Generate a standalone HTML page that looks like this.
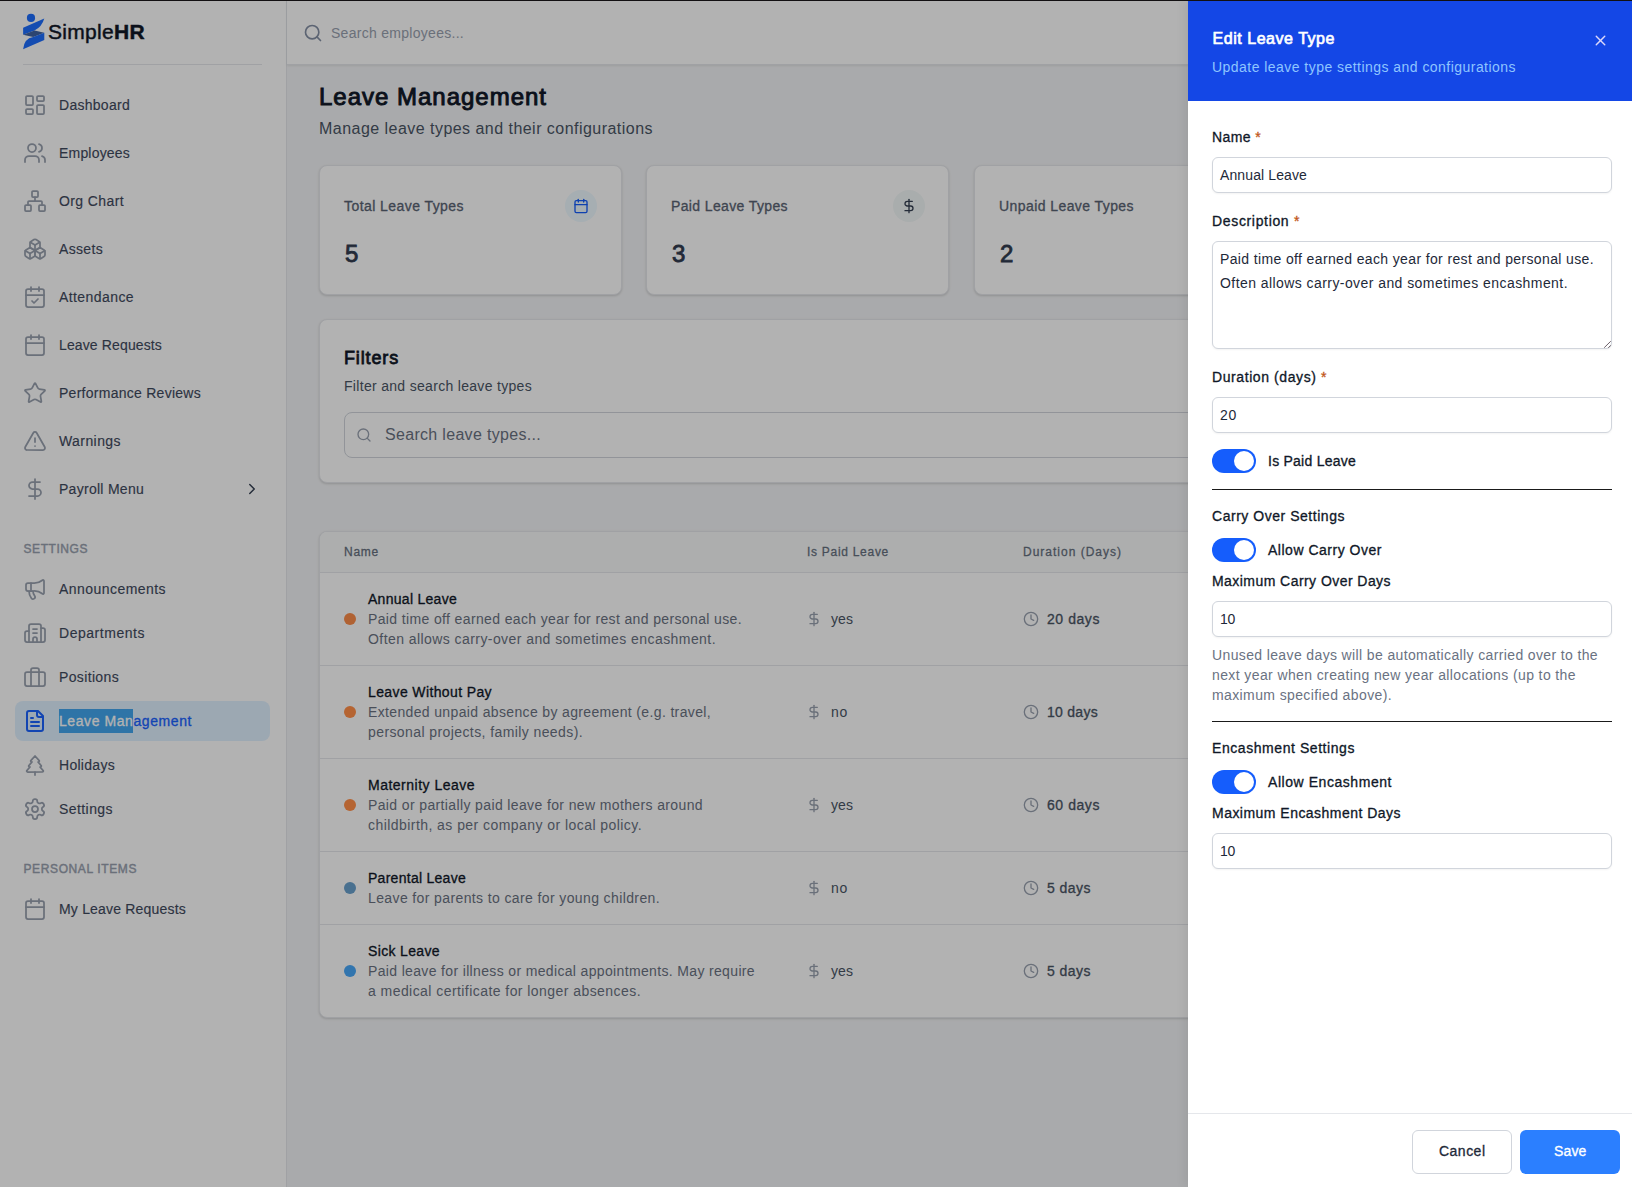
<!DOCTYPE html>
<html><head><meta charset="utf-8"><title>SimpleHR</title>
<style>
html,body{margin:0;padding:0;}
body{width:1632px;height:1187px;overflow:hidden;position:relative;background:#fff;font-family:"Liberation Sans", sans-serif;}
.a{position:absolute;}
.t{position:absolute;white-space:nowrap;font-family:"Liberation Sans", sans-serif;}
b{font-weight:700}
</style></head><body>
<div class="a" style="left:0;top:0;width:1632px;height:1187px;overflow:hidden">
<div class="a" style="left:0;top:0;width:286px;height:1187px;background:#fff;border-right:1px solid #e5e7eb"></div>
<svg class="a" style="left:18px;top:10px" width="40" height="45" viewBox="18 10 40 45">
<circle cx="31" cy="17.9" r="4.1" fill="#1e6efe"/>
<path d="M44.3 18.4 L23.1 27.8 L23.1 34.8 L34.5 30.5 Q42 26.5 44.3 18.4 Z" fill="#1e6efe"/>
<path d="M34.5 30.5 L44.3 32.8 L33.2 37 L23.1 34.8 Z" fill="#3f64a4"/>
<path d="M44.3 32.8 L44.3 40 L23.1 49.3 Q24 38.5 33.2 37 Z" fill="#1e6efe"/>
</svg>
<div class="t" style="left:48px;top:18.4px;font-size:21px;font-weight:400;color:#111827;line-height:28px;letter-spacing:0.307px;-webkit-text-stroke:0.45px currentColor;">Simple<b>HR</b></div>
<div class="a" style="left:23px;top:64px;width:239px;height:1px;background:#e5e7eb"></div>
<div class="a" style="left:23px;top:93px;width:24px;height:24px"><svg width="24" height="24" viewBox="0 0 24 24" fill="none" stroke="#99a1af" stroke-width="1.75" stroke-linecap="round" stroke-linejoin="round" style="display:block;"><rect width="7" height="9" x="3" y="3" rx="1"/><rect width="7" height="5" x="14" y="3" rx="1"/><rect width="7" height="9" x="14" y="12" rx="1"/><rect width="7" height="5" x="3" y="16" rx="1"/></svg></div>
<div class="t" style="left:59px;top:95.0px;font-size:14px;font-weight:400;color:#3f4a5e;line-height:20px;letter-spacing:0.278px;-webkit-text-stroke:0.14px currentColor;">Dashboard</div>
<div class="a" style="left:23px;top:141px;width:24px;height:24px"><svg width="24" height="24" viewBox="0 0 24 24" fill="none" stroke="#99a1af" stroke-width="1.75" stroke-linecap="round" stroke-linejoin="round" style="display:block;"><path d="M16 21v-2a4 4 0 0 0-4-4H6a4 4 0 0 0-4 4v2"/><circle cx="9" cy="7" r="4"/><path d="M22 21v-2a4 4 0 0 0-3-3.87"/><path d="M16 3.13a4 4 0 0 1 0 7.75"/></svg></div>
<div class="t" style="left:59px;top:143.0px;font-size:14px;font-weight:400;color:#3f4a5e;line-height:20px;letter-spacing:0.193px;-webkit-text-stroke:0.14px currentColor;">Employees</div>
<div class="a" style="left:23px;top:189px;width:24px;height:24px"><svg width="24" height="24" viewBox="0 0 24 24" fill="none" stroke="#99a1af" stroke-width="1.75" stroke-linecap="round" stroke-linejoin="round" style="display:block;"><rect x="16" y="16" width="6" height="6" rx="1"/><rect x="2" y="16" width="6" height="6" rx="1"/><rect x="9" y="2" width="6" height="6" rx="1"/><path d="M5 16v-3a1 1 0 0 1 1-1h12a1 1 0 0 1 1 1v3"/><path d="M12 12V8"/></svg></div>
<div class="t" style="left:59px;top:191.0px;font-size:14px;font-weight:400;color:#3f4a5e;line-height:20px;letter-spacing:0.392px;-webkit-text-stroke:0.14px currentColor;">Org Chart</div>
<div class="a" style="left:23px;top:237px;width:24px;height:24px"><svg width="24" height="24" viewBox="0 0 24 24" fill="none" stroke="#99a1af" stroke-width="1.75" stroke-linecap="round" stroke-linejoin="round" style="display:block;"><path d="M2.97 12.92A2 2 0 0 0 2 14.63v3.24a2 2 0 0 0 .97 1.71l3 1.8a2 2 0 0 0 2.06 0L12 19v-5.5l-5-3-4.03 2.42Z"/><path d="m7 16.5-4.74-2.85"/><path d="m7 16.5 5-3"/><path d="M7 16.5v5.17"/><path d="M12 13.5V19l3.97 2.38a2 2 0 0 0 2.06 0l3-1.8a2 2 0 0 0 .97-1.71v-3.24a2 2 0 0 0-.97-1.71L17 10.5l-5 3Z"/><path d="m17 16.5-5-3"/><path d="m17 16.5 4.74-2.85"/><path d="M17 16.5v5.17"/><path d="M7.97 4.42A2 2 0 0 0 7 6.13v4.37l5 3 5-3V6.13a2 2 0 0 0-.97-1.71l-3-1.8a2 2 0 0 0-2.06 0l-3 1.8Z"/><path d="M12 8 7.26 5.15"/><path d="m12 8 4.74-2.85"/><path d="M12 13.5V8"/></svg></div>
<div class="t" style="left:59px;top:239.0px;font-size:14px;font-weight:400;color:#3f4a5e;line-height:20px;letter-spacing:0.331px;-webkit-text-stroke:0.14px currentColor;">Assets</div>
<div class="a" style="left:23px;top:285px;width:24px;height:24px"><svg width="24" height="24" viewBox="0 0 24 24" fill="none" stroke="#99a1af" stroke-width="1.75" stroke-linecap="round" stroke-linejoin="round" style="display:block;"><path d="M8 2v4"/><path d="M16 2v4"/><rect width="18" height="18" x="3" y="4" rx="2"/><path d="M3 10h18"/><path d="m9 16 2 2 4-4"/></svg></div>
<div class="t" style="left:59px;top:287.0px;font-size:14px;font-weight:400;color:#3f4a5e;line-height:20px;letter-spacing:0.416px;-webkit-text-stroke:0.14px currentColor;">Attendance</div>
<div class="a" style="left:23px;top:333px;width:24px;height:24px"><svg width="24" height="24" viewBox="0 0 24 24" fill="none" stroke="#99a1af" stroke-width="1.75" stroke-linecap="round" stroke-linejoin="round" style="display:block;"><path d="M8 2v4"/><path d="M16 2v4"/><rect width="18" height="18" x="3" y="4" rx="2"/><path d="M3 10h18"/></svg></div>
<div class="t" style="left:59px;top:335.0px;font-size:14px;font-weight:400;color:#3f4a5e;line-height:20px;letter-spacing:0.129px;-webkit-text-stroke:0.14px currentColor;">Leave Requests</div>
<div class="a" style="left:23px;top:381px;width:24px;height:24px"><svg width="24" height="24" viewBox="0 0 24 24" fill="none" stroke="#99a1af" stroke-width="1.75" stroke-linecap="round" stroke-linejoin="round" style="display:block;"><path d="M11.525 2.295a.53.53 0 0 1 .95 0l2.31 4.679a2.123 2.123 0 0 0 1.595 1.16l5.166.756a.53.53 0 0 1 .294.904l-3.736 3.638a2.123 2.123 0 0 0-.611 1.878l.882 5.14a.53.53 0 0 1-.771.56l-4.618-2.428a2.122 2.122 0 0 0-1.973 0L6.396 21.01a.53.53 0 0 1-.77-.56l.881-5.139a2.122 2.122 0 0 0-.611-1.879L2.16 9.795a.53.53 0 0 1 .294-.906l5.165-.755a2.122 2.122 0 0 0 1.597-1.16z"/></svg></div>
<div class="t" style="left:59px;top:383.0px;font-size:14px;font-weight:400;color:#3f4a5e;line-height:20px;letter-spacing:0.266px;-webkit-text-stroke:0.14px currentColor;">Performance Reviews</div>
<div class="a" style="left:23px;top:429px;width:24px;height:24px"><svg width="24" height="24" viewBox="0 0 24 24" fill="none" stroke="#99a1af" stroke-width="1.75" stroke-linecap="round" stroke-linejoin="round" style="display:block;"><path d="m21.73 18-8-14a2 2 0 0 0-3.48 0l-8 14A2 2 0 0 0 4 21h16a2 2 0 0 0 1.73-3"/><path d="M12 9v4"/><path d="M12 17h.01"/></svg></div>
<div class="t" style="left:59px;top:431.0px;font-size:14px;font-weight:400;color:#3f4a5e;line-height:20px;letter-spacing:0.422px;-webkit-text-stroke:0.14px currentColor;">Warnings</div>
<div class="a" style="left:23px;top:477px;width:24px;height:24px"><svg width="24" height="24" viewBox="0 0 24 24" fill="none" stroke="#99a1af" stroke-width="1.75" stroke-linecap="round" stroke-linejoin="round" style="display:block;"><line x1="12" x2="12" y1="2" y2="22"/><path d="M17 5H9.5a3.5 3.5 0 0 0 0 7h5a3.5 3.5 0 0 1 0 7H6"/></svg></div>
<div class="t" style="left:59px;top:479.0px;font-size:14px;font-weight:400;color:#3f4a5e;line-height:20px;letter-spacing:0.275px;-webkit-text-stroke:0.14px currentColor;">Payroll Menu</div>
<div class="a" style="left:243px;top:480px;width:18px;height:18px"><svg width="18" height="18" viewBox="0 0 24 24" fill="none" stroke="#364153" stroke-width="2" stroke-linecap="round" stroke-linejoin="round" style="display:block;"><path d="m9 18 6-6-6-6"/></svg></div>
<div class="t" style="left:23.5px;top:540.5px;font-size:12px;font-weight:400;color:#99a1af;line-height:16px;letter-spacing:0.561px;-webkit-text-stroke:0.42px currentColor;">SETTINGS</div>
<div class="a" style="left:23px;top:577px;width:24px;height:24px"><svg width="24" height="24" viewBox="0 0 24 24" fill="none" stroke="#99a1af" stroke-width="1.75" stroke-linecap="round" stroke-linejoin="round" style="display:block;"><path d="M11 6a13 13 0 0 0 8.4-2.8A1 1 0 0 1 21 4v12a1 1 0 0 1-1.6.8A13 13 0 0 0 11 14H5a2 2 0 0 1-2-2V8a2 2 0 0 1 2-2z"/><path d="M6 14a12 12 0 0 0 2.4 7.2 2 2 0 0 0 3.2-2.4A8 8 0 0 1 10 14"/><path d="M8 6v8"/></svg></div>
<div class="t" style="left:59px;top:579.0px;font-size:14px;font-weight:400;color:#3f4a5e;line-height:20px;letter-spacing:0.447px;-webkit-text-stroke:0.14px currentColor;">Announcements</div>
<div class="a" style="left:23px;top:621px;width:24px;height:24px"><svg width="24" height="24" viewBox="0 0 24 24" fill="none" stroke="#99a1af" stroke-width="1.75" stroke-linecap="round" stroke-linejoin="round" style="display:block;"><path d="M10 12h4"/><path d="M10 8h4"/><path d="M14 21v-3a2 2 0 0 0-4 0v3"/><path d="M6 10H4a2 2 0 0 0-2 2v7a2 2 0 0 0 2 2h16a2 2 0 0 0 2-2V9a2 2 0 0 0-2-2h-2"/><path d="M6 21V5a2 2 0 0 1 2-2h8a2 2 0 0 1 2 2v16"/></svg></div>
<div class="t" style="left:59px;top:623.0px;font-size:14px;font-weight:400;color:#3f4a5e;line-height:20px;letter-spacing:0.531px;-webkit-text-stroke:0.14px currentColor;">Departments</div>
<div class="a" style="left:23px;top:665px;width:24px;height:24px"><svg width="24" height="24" viewBox="0 0 24 24" fill="none" stroke="#99a1af" stroke-width="1.75" stroke-linecap="round" stroke-linejoin="round" style="display:block;"><rect width="20" height="14" x="2" y="7" rx="2" ry="2"/><path d="M16 21V5a2 2 0 0 0-2-2h-4a2 2 0 0 0-2 2v16"/></svg></div>
<div class="t" style="left:59px;top:667.0px;font-size:14px;font-weight:400;color:#3f4a5e;line-height:20px;letter-spacing:0.354px;-webkit-text-stroke:0.14px currentColor;">Positions</div>
<div class="a" style="left:15px;top:701px;width:255px;height:40px;border-radius:8px;background:#e0f1ff"></div>
<div class="a" style="left:23px;top:709px;width:24px;height:24px"><svg width="24" height="24" viewBox="0 0 24 24" fill="none" stroke="#1a63ff" stroke-width="2" stroke-linecap="round" stroke-linejoin="round" style="display:block;"><path d="M15 2H6a2 2 0 0 0-2 2v16a2 2 0 0 0 2 2h12a2 2 0 0 0 2-2V7Z"/><path d="M14 2v4a2 2 0 0 0 2 2h4"/><path d="M10 9H8"/><path d="M16 13H8"/><path d="M16 17H8"/></svg></div>
<div class="t" style="left:59px;top:711.0px;font-size:14px;font-weight:400;color:#1a63ff;line-height:20px;letter-spacing:0.577px;-webkit-text-stroke:0.31px currentColor;"><span style="display:inline-block;height:24px;line-height:24px;margin:-2px 0;background:#43a7ef;color:#fff;vertical-align:top">Leave Man</span>agement</div>
<div class="a" style="left:23px;top:753px;width:24px;height:24px"><svg width="24" height="24" viewBox="0 0 24 24" fill="none" stroke="#99a1af" stroke-width="1.75" stroke-linecap="round" stroke-linejoin="round" style="display:block;"><path d="m17 14 3 3.3a1 1 0 0 1-.7 1.7H4.7a1 1 0 0 1-.7-1.7L7 14h-.3a1 1 0 0 1-.7-1.7L9 9h-.2A1 1 0 0 1 8 7.3L12 3l4 4.3a1 1 0 0 1-.8 1.7H15l3 3.3a1 1 0 0 1-.7 1.7H17Z"/><path d="M12 22v-3"/></svg></div>
<div class="t" style="left:59px;top:755.0px;font-size:14px;font-weight:400;color:#3f4a5e;line-height:20px;letter-spacing:0.287px;-webkit-text-stroke:0.14px currentColor;">Holidays</div>
<div class="a" style="left:23px;top:797px;width:24px;height:24px"><svg width="24" height="24" viewBox="0 0 24 24" fill="none" stroke="#99a1af" stroke-width="1.75" stroke-linecap="round" stroke-linejoin="round" style="display:block;"><path d="M12.22 2h-.44a2 2 0 0 0-2 2v.18a2 2 0 0 1-1 1.73l-.43.25a2 2 0 0 1-2 0l-.15-.08a2 2 0 0 0-2.73.73l-.22.38a2 2 0 0 0 .73 2.73l.15.1a2 2 0 0 1 1 1.72v.51a2 2 0 0 1-1 1.74l-.15.09a2 2 0 0 0-.73 2.73l.22.38a2 2 0 0 0 2.73.73l.15-.08a2 2 0 0 1 2 0l.43.25a2 2 0 0 1 1 1.73V20a2 2 0 0 0 2 2h.44a2 2 0 0 0 2-2v-.18a2 2 0 0 1 1-1.73l.43-.25a2 2 0 0 1 2 0l.15.08a2 2 0 0 0 2.73-.73l.22-.39a2 2 0 0 0-.73-2.73l-.15-.08a2 2 0 0 1-1-1.74v-.5a2 2 0 0 1 1-1.74l.15-.09a2 2 0 0 0 .73-2.73l-.22-.38a2 2 0 0 0-2.73-.73l-.15.08a2 2 0 0 1-2 0l-.43-.25a2 2 0 0 1-1-1.73V4a2 2 0 0 0-2-2z"/><circle cx="12" cy="12" r="3"/></svg></div>
<div class="t" style="left:59px;top:799.0px;font-size:14px;font-weight:400;color:#3f4a5e;line-height:20px;letter-spacing:0.426px;-webkit-text-stroke:0.14px currentColor;">Settings</div>
<div class="t" style="left:23.5px;top:860.5px;font-size:12px;font-weight:400;color:#99a1af;line-height:16px;letter-spacing:0.613px;-webkit-text-stroke:0.42px currentColor;">PERSONAL ITEMS</div>
<div class="a" style="left:23px;top:897px;width:24px;height:24px"><svg width="24" height="24" viewBox="0 0 24 24" fill="none" stroke="#99a1af" stroke-width="1.75" stroke-linecap="round" stroke-linejoin="round" style="display:block;"><path d="M8 2v4"/><path d="M16 2v4"/><rect width="18" height="18" x="3" y="4" rx="2"/><path d="M3 10h18"/></svg></div>
<div class="t" style="left:59px;top:899.0px;font-size:14px;font-weight:400;color:#3f4a5e;line-height:20px;letter-spacing:0.192px;-webkit-text-stroke:0.14px currentColor;">My Leave Requests</div>
<div class="a" style="left:287px;top:0;width:1345px;height:1187px;background:#f3f4f6"></div>
<div class="a" style="left:287px;top:0;width:1345px;height:64px;background:#fff;border-bottom:1px solid #e5e7eb;box-shadow:0 1px 2px rgba(0,0,0,.08)"></div>
<div class="a" style="left:303px;top:23px;width:20px;height:20px"><svg width="20" height="20" viewBox="0 0 24 24" fill="none" stroke="#8590a5" stroke-width="2" stroke-linecap="round" stroke-linejoin="round" style="display:block;"><circle cx="11" cy="11" r="8"/><path d="m21 21-4.3-4.3"/></svg></div>
<div class="t" style="left:331px;top:23.0px;font-size:14px;font-weight:400;color:#99a1af;line-height:20px;letter-spacing:0.283px;">Search employees...</div>
<div class="t" style="left:319px;top:81.0px;font-size:24px;font-weight:400;color:#101828;line-height:32px;letter-spacing:0.990px;-webkit-text-stroke:0.96px currentColor;">Leave Management</div>
<div class="t" style="left:319px;top:117.0px;font-size:16px;font-weight:400;color:#4a5565;line-height:24px;letter-spacing:0.465px;">Manage leave types and their configurations</div>
<div class="a" style="left:319px;top:165px;width:303px;height:130px;background:#fff;border:1px solid #e5e7eb;border-radius:8px;box-sizing:border-box;box-shadow:0 1px 3px rgba(0,0,0,.1),0 1px 2px rgba(0,0,0,.06)"></div>
<div class="t" style="left:344px;top:196.0px;font-size:14px;font-weight:400;color:#5a6474;line-height:20px;letter-spacing:0.435px;-webkit-text-stroke:0.31px currentColor;">Total Leave Types</div>
<div class="t" style="left:345px;top:238.0px;font-size:24px;font-weight:400;color:#323c50;line-height:32px;letter-spacing:0.000px;letter-spacing:0.5px;-webkit-text-stroke:0.84px currentColor;">5</div>
<div class="a" style="left:646px;top:165px;width:303px;height:130px;background:#fff;border:1px solid #e5e7eb;border-radius:8px;box-sizing:border-box;box-shadow:0 1px 3px rgba(0,0,0,.1),0 1px 2px rgba(0,0,0,.06)"></div>
<div class="t" style="left:671px;top:196.0px;font-size:14px;font-weight:400;color:#5a6474;line-height:20px;letter-spacing:0.372px;-webkit-text-stroke:0.31px currentColor;">Paid Leave Types</div>
<div class="t" style="left:672px;top:238.0px;font-size:24px;font-weight:400;color:#323c50;line-height:32px;letter-spacing:0.000px;letter-spacing:0.5px;-webkit-text-stroke:0.84px currentColor;">3</div>
<div class="a" style="left:974px;top:165px;width:303px;height:130px;background:#fff;border:1px solid #e5e7eb;border-radius:8px;box-sizing:border-box;box-shadow:0 1px 3px rgba(0,0,0,.1),0 1px 2px rgba(0,0,0,.06)"></div>
<div class="t" style="left:999px;top:196.0px;font-size:14px;font-weight:400;color:#5a6474;line-height:20px;letter-spacing:0.423px;-webkit-text-stroke:0.31px currentColor;">Unpaid Leave Types</div>
<div class="t" style="left:1000px;top:238.0px;font-size:24px;font-weight:400;color:#323c50;line-height:32px;letter-spacing:0.000px;letter-spacing:0.5px;-webkit-text-stroke:0.84px currentColor;">2</div>
<div class="a" style="left:565px;top:190px;width:32px;height:32px;border-radius:16px;background:#eef9ff"></div>
<div class="a" style="left:573px;top:198px;width:16px;height:16px"><svg width="16" height="16" viewBox="0 0 24 24" fill="none" stroke="#155dfc" stroke-width="2" stroke-linecap="round" stroke-linejoin="round" style="display:block;"><path d="M8 2v4"/><path d="M16 2v4"/><rect width="18" height="18" x="3" y="4" rx="2"/><path d="M3 10h18"/></svg></div>
<div class="a" style="left:893px;top:190px;width:32px;height:32px;border-radius:16px;background:#f3f8f8"></div>
<div class="a" style="left:901px;top:198px;width:16px;height:16px"><svg width="16" height="16" viewBox="0 0 24 24" fill="none" stroke="#364153" stroke-width="2" stroke-linecap="round" stroke-linejoin="round" style="display:block;"><line x1="12" x2="12" y1="2" y2="22"/><path d="M17 5H9.5a3.5 3.5 0 0 0 0 7h5a3.5 3.5 0 0 1 0 7H6"/></svg></div>
<div class="a" style="left:319px;top:319px;width:1285px;height:164px;background:#fff;border:1px solid #e5e7eb;border-radius:8px;box-sizing:border-box;box-shadow:0 1px 3px rgba(0,0,0,.1),0 1px 2px rgba(0,0,0,.06)"></div>
<div class="t" style="left:344px;top:344.0px;font-size:18px;font-weight:400;color:#101828;line-height:28px;letter-spacing:0.857px;-webkit-text-stroke:0.76px currentColor;">Filters</div>
<div class="t" style="left:344px;top:376.0px;font-size:14px;font-weight:400;color:#4a5565;line-height:20px;letter-spacing:0.311px;">Filter and search leave types</div>
<div class="a" style="left:344px;top:412px;width:1232px;height:46px;border:1px solid #d1d5dc;border-radius:8px;box-sizing:border-box;background:#fff"></div>
<div class="a" style="left:356px;top:427px;width:16px;height:16px"><svg width="16" height="16" viewBox="0 0 24 24" fill="none" stroke="#99a1af" stroke-width="2" stroke-linecap="round" stroke-linejoin="round" style="display:block;"><circle cx="11" cy="11" r="8"/><path d="m21 21-4.3-4.3"/></svg></div>
<div class="t" style="left:385px;top:423.0px;font-size:16px;font-weight:400;color:#6a7282;line-height:24px;letter-spacing:0.313px;">Search leave types...</div>
<div class="a" style="left:319px;top:531px;width:1285px;height:487px;background:#fff;border:1px solid #e5e7eb;border-radius:8px;box-sizing:border-box;box-shadow:0 1px 3px rgba(0,0,0,.1),0 1px 2px rgba(0,0,0,.06);overflow:hidden"><div style="height:40px;background:#f8faf9;border-bottom:1px solid #e5e7eb"></div></div>
<div class="t" style="left:344px;top:543.5px;font-size:12px;font-weight:400;color:#667080;line-height:16px;letter-spacing:0.746px;-webkit-text-stroke:0.26px currentColor;">Name</div>
<div class="t" style="left:807px;top:543.5px;font-size:12px;font-weight:400;color:#667080;line-height:16px;letter-spacing:0.714px;-webkit-text-stroke:0.26px currentColor;">Is Paid Leave</div>
<div class="t" style="left:1023px;top:543.5px;font-size:12px;font-weight:400;color:#667080;line-height:16px;letter-spacing:0.998px;-webkit-text-stroke:0.26px currentColor;">Duration (Days)</div>
<div class="t" style="left:368px;top:589.0px;font-size:14px;font-weight:400;color:#101828;line-height:20px;letter-spacing:0.280px;-webkit-text-stroke:0.31px currentColor;">Annual Leave</div>
<div class="t" style="left:368px;top:609.0px;font-size:14px;font-weight:400;color:#6a7282;line-height:20px;letter-spacing:0.367px;">Paid time off earned each year for rest and personal use.</div>
<div class="t" style="left:368px;top:629.0px;font-size:14px;font-weight:400;color:#6a7282;line-height:20px;letter-spacing:0.432px;">Often allows carry-over and sometimes encashment.</div>
<div class="a" style="left:806px;top:611.0px;width:16px;height:16px"><svg width="16" height="16" viewBox="0 0 24 24" fill="none" stroke="#99a1af" stroke-width="2" stroke-linecap="round" stroke-linejoin="round" style="display:block;"><line x1="12" x2="12" y1="2" y2="22"/><path d="M17 5H9.5a3.5 3.5 0 0 0 0 7h5a3.5 3.5 0 0 1 0 7H6"/></svg></div>
<div class="t" style="left:831px;top:609.0px;font-size:14px;font-weight:400;color:#4a5565;line-height:20px;letter-spacing:0.068px;">yes</div>
<div class="a" style="left:1023px;top:611.0px;width:16px;height:16px"><svg width="16" height="16" viewBox="0 0 24 24" fill="none" stroke="#99a1af" stroke-width="2" stroke-linecap="round" stroke-linejoin="round" style="display:block;"><circle cx="12" cy="12" r="10"/><polyline points="12 6 12 12 16 14"/></svg></div>
<div class="t" style="left:1047px;top:609.0px;font-size:14px;font-weight:400;color:#4a5565;line-height:20px;letter-spacing:0.565px;-webkit-text-stroke:0.31px currentColor;">20 days</div>
<div class="a" style="left:320px;top:665px;width:1280px;height:1px;background:#e5e7eb"></div>
<div class="t" style="left:368px;top:682.0px;font-size:14px;font-weight:400;color:#101828;line-height:20px;letter-spacing:0.381px;-webkit-text-stroke:0.31px currentColor;">Leave Without Pay</div>
<div class="t" style="left:368px;top:702.0px;font-size:14px;font-weight:400;color:#6a7282;line-height:20px;letter-spacing:0.353px;">Extended unpaid absence by agreement (e.g. travel,</div>
<div class="t" style="left:368px;top:722.0px;font-size:14px;font-weight:400;color:#6a7282;line-height:20px;letter-spacing:0.408px;">personal projects, family needs).</div>
<div class="a" style="left:806px;top:704.0px;width:16px;height:16px"><svg width="16" height="16" viewBox="0 0 24 24" fill="none" stroke="#99a1af" stroke-width="2" stroke-linecap="round" stroke-linejoin="round" style="display:block;"><line x1="12" x2="12" y1="2" y2="22"/><path d="M17 5H9.5a3.5 3.5 0 0 0 0 7h5a3.5 3.5 0 0 1 0 7H6"/></svg></div>
<div class="t" style="left:831px;top:702.0px;font-size:14px;font-weight:400;color:#4a5565;line-height:20px;letter-spacing:0.711px;">no</div>
<div class="a" style="left:1023px;top:704.0px;width:16px;height:16px"><svg width="16" height="16" viewBox="0 0 24 24" fill="none" stroke="#99a1af" stroke-width="2" stroke-linecap="round" stroke-linejoin="round" style="display:block;"><circle cx="12" cy="12" r="10"/><polyline points="12 6 12 12 16 14"/></svg></div>
<div class="t" style="left:1047px;top:702.0px;font-size:14px;font-weight:400;color:#4a5565;line-height:20px;letter-spacing:0.279px;-webkit-text-stroke:0.31px currentColor;">10 days</div>
<div class="a" style="left:320px;top:758px;width:1280px;height:1px;background:#e5e7eb"></div>
<div class="t" style="left:368px;top:775.0px;font-size:14px;font-weight:400;color:#101828;line-height:20px;letter-spacing:0.493px;-webkit-text-stroke:0.31px currentColor;">Maternity Leave</div>
<div class="t" style="left:368px;top:795.0px;font-size:14px;font-weight:400;color:#6a7282;line-height:20px;letter-spacing:0.373px;">Paid or partially paid leave for new mothers around</div>
<div class="t" style="left:368px;top:815.0px;font-size:14px;font-weight:400;color:#6a7282;line-height:20px;letter-spacing:0.443px;">childbirth, as per company or local policy.</div>
<div class="a" style="left:806px;top:797.0px;width:16px;height:16px"><svg width="16" height="16" viewBox="0 0 24 24" fill="none" stroke="#99a1af" stroke-width="2" stroke-linecap="round" stroke-linejoin="round" style="display:block;"><line x1="12" x2="12" y1="2" y2="22"/><path d="M17 5H9.5a3.5 3.5 0 0 0 0 7h5a3.5 3.5 0 0 1 0 7H6"/></svg></div>
<div class="t" style="left:831px;top:795.0px;font-size:14px;font-weight:400;color:#4a5565;line-height:20px;letter-spacing:0.068px;">yes</div>
<div class="a" style="left:1023px;top:797.0px;width:16px;height:16px"><svg width="16" height="16" viewBox="0 0 24 24" fill="none" stroke="#99a1af" stroke-width="2" stroke-linecap="round" stroke-linejoin="round" style="display:block;"><circle cx="12" cy="12" r="10"/><polyline points="12 6 12 12 16 14"/></svg></div>
<div class="t" style="left:1047px;top:795.0px;font-size:14px;font-weight:400;color:#4a5565;line-height:20px;letter-spacing:0.565px;-webkit-text-stroke:0.31px currentColor;">60 days</div>
<div class="a" style="left:320px;top:851px;width:1280px;height:1px;background:#e5e7eb"></div>
<div class="t" style="left:368px;top:868.0px;font-size:14px;font-weight:400;color:#101828;line-height:20px;letter-spacing:0.272px;-webkit-text-stroke:0.31px currentColor;">Parental Leave</div>
<div class="t" style="left:368px;top:888.0px;font-size:14px;font-weight:400;color:#6a7282;line-height:20px;letter-spacing:0.384px;">Leave for parents to care for young children.</div>
<div class="a" style="left:806px;top:880.0px;width:16px;height:16px"><svg width="16" height="16" viewBox="0 0 24 24" fill="none" stroke="#99a1af" stroke-width="2" stroke-linecap="round" stroke-linejoin="round" style="display:block;"><line x1="12" x2="12" y1="2" y2="22"/><path d="M17 5H9.5a3.5 3.5 0 0 0 0 7h5a3.5 3.5 0 0 1 0 7H6"/></svg></div>
<div class="t" style="left:831px;top:878.0px;font-size:14px;font-weight:400;color:#4a5565;line-height:20px;letter-spacing:0.711px;">no</div>
<div class="a" style="left:1023px;top:880.0px;width:16px;height:16px"><svg width="16" height="16" viewBox="0 0 24 24" fill="none" stroke="#99a1af" stroke-width="2" stroke-linecap="round" stroke-linejoin="round" style="display:block;"><circle cx="12" cy="12" r="10"/><polyline points="12 6 12 12 16 14"/></svg></div>
<div class="t" style="left:1047px;top:878.0px;font-size:14px;font-weight:400;color:#4a5565;line-height:20px;letter-spacing:0.458px;-webkit-text-stroke:0.31px currentColor;">5 days</div>
<div class="a" style="left:320px;top:924px;width:1280px;height:1px;background:#e5e7eb"></div>
<div class="t" style="left:368px;top:941.0px;font-size:14px;font-weight:400;color:#101828;line-height:20px;letter-spacing:0.352px;-webkit-text-stroke:0.31px currentColor;">Sick Leave</div>
<div class="t" style="left:368px;top:961.0px;font-size:14px;font-weight:400;color:#6a7282;line-height:20px;letter-spacing:0.347px;">Paid leave for illness or medical appointments. May require</div>
<div class="t" style="left:368px;top:981.0px;font-size:14px;font-weight:400;color:#6a7282;line-height:20px;letter-spacing:0.441px;">a medical certificate for longer absences.</div>
<div class="a" style="left:806px;top:963.0px;width:16px;height:16px"><svg width="16" height="16" viewBox="0 0 24 24" fill="none" stroke="#99a1af" stroke-width="2" stroke-linecap="round" stroke-linejoin="round" style="display:block;"><line x1="12" x2="12" y1="2" y2="22"/><path d="M17 5H9.5a3.5 3.5 0 0 0 0 7h5a3.5 3.5 0 0 1 0 7H6"/></svg></div>
<div class="t" style="left:831px;top:961.0px;font-size:14px;font-weight:400;color:#4a5565;line-height:20px;letter-spacing:0.068px;">yes</div>
<div class="a" style="left:1023px;top:963.0px;width:16px;height:16px"><svg width="16" height="16" viewBox="0 0 24 24" fill="none" stroke="#99a1af" stroke-width="2" stroke-linecap="round" stroke-linejoin="round" style="display:block;"><circle cx="12" cy="12" r="10"/><polyline points="12 6 12 12 16 14"/></svg></div>
<div class="t" style="left:1047px;top:961.0px;font-size:14px;font-weight:400;color:#4a5565;line-height:20px;letter-spacing:0.458px;-webkit-text-stroke:0.31px currentColor;">5 days</div>
</div>
<div class="a" style="left:0;top:0;width:1632px;height:1187px;background:rgba(0,0,0,.3)"></div>
<div class="a" style="left:344px;top:613.0px;width:12px;height:12px;border-radius:6px;background:#b06233"></div>
<div class="a" style="left:344px;top:706.0px;width:12px;height:12px;border-radius:6px;background:#b56432"></div>
<div class="a" style="left:344px;top:799.0px;width:12px;height:12px;border-radius:6px;background:#b56432"></div>
<div class="a" style="left:344px;top:882.0px;width:12px;height:12px;border-radius:6px;background:#49708f"></div>
<div class="a" style="left:344px;top:965.0px;width:12px;height:12px;border-radius:6px;background:#3275ae"></div>
<div class="a" style="left:1188px;top:0;width:444px;height:1187px;background:#fff;box-shadow:-3px 0 10px rgba(0,0,0,.07)"></div>
<div class="a" style="left:1188px;top:0;width:444px;height:100.6px;background:#1447e6"></div>
<div class="t" style="left:1212.5px;top:24.700000000000003px;font-size:16px;font-weight:400;color:#fff;line-height:28px;letter-spacing:0.536px;-webkit-text-stroke:0.67px currentColor;">Edit Leave Type</div>
<div class="t" style="left:1212px;top:57.0px;font-size:14px;font-weight:400;color:#8ec5ff;line-height:20px;letter-spacing:0.460px;">Update leave type settings and configurations</div>
<div class="a" style="left:1591.6px;top:31.5px;width:17px;height:17px"><svg width="17" height="17" viewBox="0 0 24 24" fill="none" stroke="#dcd8fa" stroke-width="2" stroke-linecap="round" stroke-linejoin="round" style="display:block;"><path d="M18 6 6 18"/><path d="m6 6 12 12"/></svg></div>
<div class="t" style="left:1212px;top:127.0px;font-size:14px;font-weight:400;color:#101828;line-height:20px;letter-spacing:0.385px;-webkit-text-stroke:0.31px currentColor;">Name <span style="color:#c2571a">*</span></div>
<div class="a" style="left:1212px;top:157px;width:400px;height:36px;border:1px solid #d1d5dc;border-radius:6px;box-sizing:border-box;background:#fff;box-shadow:0 1px 2px rgba(0,0,0,.05)"></div>
<div class="t" style="left:1220px;top:165.0px;font-size:14px;font-weight:400;color:#1e2939;line-height:20px;letter-spacing:0.113px;">Annual Leave</div>
<div class="t" style="left:1212px;top:211.0px;font-size:14px;font-weight:400;color:#101828;line-height:20px;letter-spacing:0.663px;-webkit-text-stroke:0.31px currentColor;">Description <span style="color:#c2571a">*</span></div>
<div class="a" style="left:1212px;top:241px;width:400px;height:108px;border:1px solid #d1d5dc;border-radius:6px;box-sizing:border-box;background:#fff;box-shadow:0 1px 2px rgba(0,0,0,.05)"></div>
<div class="t" style="left:1220px;top:249.0px;font-size:14px;font-weight:400;color:#1e2939;line-height:20px;letter-spacing:0.367px;">Paid time off earned each year for rest and personal use.</div>
<div class="t" style="left:1220px;top:273.0px;font-size:14px;font-weight:400;color:#1e2939;line-height:20px;letter-spacing:0.432px;">Often allows carry-over and sometimes encashment.</div>
<svg class="a" style="left:1602px;top:339px" width="9" height="9" viewBox="0 0 9 9"><path d="M2.2 8.7 L8.8 2.2 M6.3 8.7 L8.8 6.4" stroke="#6b5f68" stroke-width="1" fill="none"/></svg>
<div class="t" style="left:1212px;top:367.0px;font-size:14px;font-weight:400;color:#101828;line-height:20px;letter-spacing:0.585px;-webkit-text-stroke:0.31px currentColor;">Duration (days) <span style="color:#c2571a">*</span></div>
<div class="a" style="left:1212px;top:397px;width:400px;height:36px;border:1px solid #d1d5dc;border-radius:6px;box-sizing:border-box;background:#fff;box-shadow:0 1px 2px rgba(0,0,0,.05)"></div>
<div class="t" style="left:1220px;top:405.0px;font-size:14px;font-weight:400;color:#1e2939;line-height:20px;letter-spacing:0.711px;">20</div>
<div class="a" style="left:1212px;top:449px;width:44px;height:24px;border-radius:12px;background:#155dfc"></div><div class="a" style="left:1234px;top:451px;width:20px;height:20px;border-radius:10px;background:#fff"></div><div class="t" style="left:1268px;top:451.0px;font-size:14px;font-weight:400;color:#101828;line-height:20px;letter-spacing:0.243px;-webkit-text-stroke:0.31px currentColor;">Is Paid Leave</div>
<div class="a" style="left:1212px;top:489px;width:400px;height:1px;background:#1a1a1a"></div>
<div class="t" style="left:1212px;top:506.0px;font-size:14px;font-weight:400;color:#101828;line-height:20px;letter-spacing:0.530px;-webkit-text-stroke:0.31px currentColor;">Carry Over Settings</div>
<div class="a" style="left:1212px;top:538px;width:44px;height:24px;border-radius:12px;background:#155dfc"></div><div class="a" style="left:1234px;top:540px;width:20px;height:20px;border-radius:10px;background:#fff"></div><div class="t" style="left:1268px;top:540.0px;font-size:14px;font-weight:400;color:#101828;line-height:20px;letter-spacing:0.513px;-webkit-text-stroke:0.31px currentColor;">Allow Carry Over</div>
<div class="t" style="left:1212px;top:571.0px;font-size:14px;font-weight:400;color:#101828;line-height:20px;letter-spacing:0.444px;-webkit-text-stroke:0.31px currentColor;">Maximum Carry Over Days</div>
<div class="a" style="left:1212px;top:601px;width:400px;height:36px;border:1px solid #d1d5dc;border-radius:6px;box-sizing:border-box;background:#fff;box-shadow:0 1px 2px rgba(0,0,0,.05)"></div>
<div class="t" style="left:1220px;top:609.0px;font-size:14px;font-weight:400;color:#1e2939;line-height:20px;letter-spacing:-0.289px;">10</div>
<div class="t" style="left:1212px;top:645.0px;font-size:14px;font-weight:400;color:#6a7282;line-height:20px;letter-spacing:0.370px;">Unused leave days will be automatically carried over to the</div>
<div class="t" style="left:1212px;top:665.0px;font-size:14px;font-weight:400;color:#6a7282;line-height:20px;letter-spacing:0.392px;">next year when creating new year allocations (up to the</div>
<div class="t" style="left:1212px;top:685.0px;font-size:14px;font-weight:400;color:#6a7282;line-height:20px;letter-spacing:0.384px;">maximum specified above).</div>
<div class="a" style="left:1212px;top:720.5px;width:400px;height:1px;background:#1a1a1a"></div>
<div class="t" style="left:1212px;top:738.0px;font-size:14px;font-weight:400;color:#101828;line-height:20px;letter-spacing:0.563px;-webkit-text-stroke:0.31px currentColor;">Encashment Settings</div>
<div class="a" style="left:1212px;top:770px;width:44px;height:24px;border-radius:12px;background:#155dfc"></div><div class="a" style="left:1234px;top:772px;width:20px;height:20px;border-radius:10px;background:#fff"></div><div class="t" style="left:1268px;top:772.0px;font-size:14px;font-weight:400;color:#101828;line-height:20px;letter-spacing:0.552px;-webkit-text-stroke:0.31px currentColor;">Allow Encashment</div>
<div class="t" style="left:1212px;top:803.0px;font-size:14px;font-weight:400;color:#101828;line-height:20px;letter-spacing:0.471px;-webkit-text-stroke:0.31px currentColor;">Maximum Encashment Days</div>
<div class="a" style="left:1212px;top:833px;width:400px;height:36px;border:1px solid #d1d5dc;border-radius:6px;box-sizing:border-box;background:#fff;box-shadow:0 1px 2px rgba(0,0,0,.05)"></div>
<div class="t" style="left:1220px;top:841.0px;font-size:14px;font-weight:400;color:#1e2939;line-height:20px;letter-spacing:-0.289px;">10</div>
<div class="a" style="left:1188px;top:1113px;width:444px;height:1px;background:#e5e7eb"></div>
<div class="a" style="left:1412px;top:1130px;width:100px;height:44px;border:1px solid #d1d5dc;border-radius:6px;box-sizing:border-box;background:#fff"></div>
<div class="t" style="left:1439px;top:1141.0px;font-size:14px;font-weight:400;color:#1e2939;line-height:20px;letter-spacing:0.484px;-webkit-text-stroke:0.31px currentColor;">Cancel</div>
<div class="a" style="left:1520px;top:1130px;width:100px;height:44px;border-radius:6px;background:#2b7fff"></div>
<div class="t" style="left:1554px;top:1141.0px;font-size:14px;font-weight:400;color:#fff;line-height:20px;letter-spacing:0.145px;-webkit-text-stroke:0.31px currentColor;">Save</div>
<div class="a" style="left:0;top:0;width:1632px;height:1px;background:#121012"></div>
</body></html>
